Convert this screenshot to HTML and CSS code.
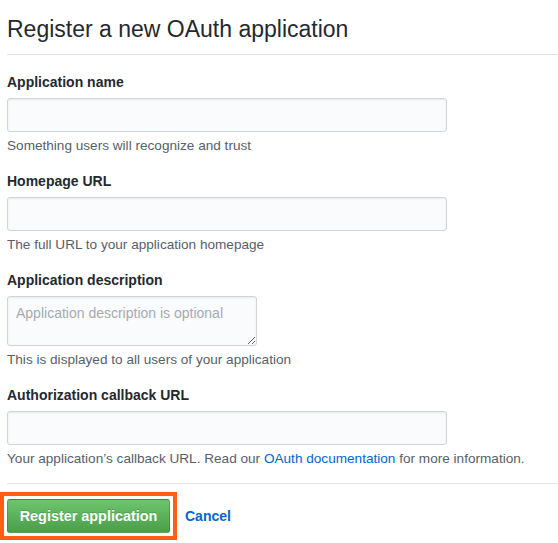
FILE: index.html
```html
<!DOCTYPE html>
<html>
<head>
<meta charset="utf-8">
<link rel="stylesheet" href="styles.css">
</head>
<body>
<div class="page">
  <h1 class="title">Register a new OAuth application</h1>
  <form class="form">
    <div class="group">
      <label class="label">Application name</label>
      <input class="input" type="text">
      <p class="note">Something users will recognize and trust</p>
    </div>
    <div class="group">
      <label class="label">Homepage URL</label>
      <input class="input" type="text">
      <p class="note">The full URL to your application homepage</p>
    </div>
    <div class="group">
      <label class="label">Application description</label>
      <textarea class="textarea" placeholder="Application description is optional"></textarea>
      <p class="note">This is displayed to all users of your application</p>
    </div>
    <div class="group">
      <label class="label">Authorization callback URL</label>
      <input class="input" type="text">
      <p class="note">Your application’s callback URL. Read our <a class="link" href="#">OAuth documentation</a> for more information.</p>
    </div>
    <div class="actions">
      <span class="highlight">
        <button class="btn-primary" type="button">Register application</button>
      </span>
      <a class="cancel" href="#">Cancel</a>
    </div>
  </form>
</div>
</body>
</html>
```

FILE: styles.css
```css
html, body {
  margin: 0;
  padding: 0;
  background: #fff;
}
body {
  font-family: "Liberation Sans", Arial, sans-serif;
  color: #24292e;
  overflow: hidden;
}
.page {
  padding-left: 7px;
}
.title {
  margin: 14px 0 0 0;
  font-size: 23px;
  font-weight: normal;
  line-height: 30px;
  padding-bottom: 10px;
  border-bottom: 1px solid #e1e4e8;
}
.form {
  margin: 0;
  padding-top: 16px;
}
.group {
  display: flex;
  flex-direction: column;
  align-items: flex-start;
  margin-bottom: 15px;
}
.label {
  font-size: 14px;
  font-weight: bold;
  line-height: 20px;
  padding-top: 1px;
  margin-bottom: 6px;
}
.input {
  box-sizing: border-box;
  width: 440px;
  height: 34px;
  margin: 0;
  background: #fafbfc;
  border: 1px solid #d1d5da;
  border-radius: 3px;
  box-shadow: inset 0 1px 2px rgba(27, 31, 35, 0.075);
  padding: 6px 8px;
  font: 14px "Liberation Sans", Arial, sans-serif;
}
.textarea {
  box-sizing: border-box;
  width: 250px;
  height: 50px;
  margin: 0;
  background: #fafbfc;
  border: 1px solid #d1d5da;
  border-radius: 3px;
  box-shadow: inset 0 1px 2px rgba(27, 31, 35, 0.075);
  padding: 7px 8px;
  font: 14px/18px "Liberation Sans", Arial, sans-serif;
  resize: both;
}
.textarea::placeholder {
  color: #a5abb1;
}
.note {
  margin: 5px 0 0 0;
  font-size: 13.6px;
  line-height: 18px;
  color: #586069;
}
.link {
  color: #0366d6;
  text-decoration: none;
}
.actions {
  display: flex;
  align-items: center;
  border-top: 1px solid #e1e4e8;
  margin-top: 15px;
  padding-top: 8px;
}
.highlight {
  display: flex;
  margin-left: -7px;
  border: 4px solid #ff5f12;
  padding: 3px;
}
.btn-primary {
  box-sizing: border-box;
  width: 163px;
  height: 34px;
  padding: 0;
  font: bold 14.4px "Liberation Sans", Arial, sans-serif;
  color: #fff;
  text-shadow: 0 -1px 0 rgba(0, 0, 0, 0.15);
  background-color: #55aa52;
  background-image: linear-gradient(#6cc56c, #4b9e48);
  border: 1px solid rgba(27, 31, 35, 0.2);
  border-radius: 3px;
}
.cancel {
  margin-left: 8px;
  font-size: 14px;
  font-weight: bold;
  color: #0366d6;
  text-decoration: none;
}
```
